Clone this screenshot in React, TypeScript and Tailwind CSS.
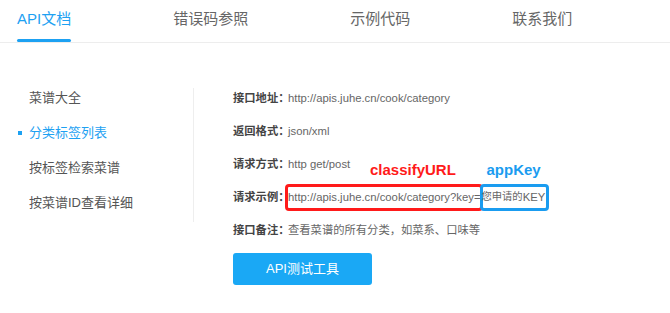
import React from "react";

const font = { fontFamily: '"Liberation Sans", "Noto Sans CJK SC", sans-serif' };

export default function App() {
  const tabs = ["API文档", "错误码参照", "示例代码", "联系我们"];
  const side = ["菜谱大全", "分类标签列表", "按标签检索菜谱", "按菜谱ID查看详细"];
  return (
    <div
      className="w-[670px] h-[313px] bg-white overflow-hidden font-['Liberation_Sans','Noto_Sans_CJK_SC',sans-serif]"
      style={font}
    >
      <div className="h-[43px] border-b border-[#ededed] flex items-stretch pl-[17px] gap-[102px]">
        {tabs.map((t, i) => (
          <div
            key={t}
            className={
              "flex flex-col justify-end text-[15px] " +
              (i === 0 ? "text-[#1da1f2]" : "text-[#666]")
            }
          >
            <div className="leading-[20px] mb-[10px] whitespace-nowrap">{t}</div>
            <div className={"h-[3px] rounded-full " + (i === 0 ? "bg-[#1da1f2]" : "bg-transparent")} />
          </div>
        ))}
      </div>
      <div className="flex mt-[45px]">
        <div className="w-[194px] h-[134px] border-r border-[#eeeeee] flex flex-col gap-[15px]">
          {side.map((s, i) => (
            <div
              key={s}
              className={
                "relative h-[20px] leading-[20px] pl-[29px] text-[13px] whitespace-nowrap " +
                (i === 1 ? "text-[#1da1f2]" : "text-[#555]")
              }
            >
              {i === 1 && (
                <span className="absolute left-[18px] top-[8px] w-[4px] h-[4px] bg-[#1da1f2]" />
              )}
              {s}
            </div>
          ))}
        </div>
        <div className="pl-[39px] flex flex-col gap-[13px] text-[11.3px]">
          <div className="h-[20px] flex items-center whitespace-nowrap">
            <span className="w-[52px] font-bold text-[#444]">接口地址：</span>
            <span className="ml-[3px] text-[#666]">http://apis.juhe.cn/cook/category</span>
          </div>
          <div className="h-[20px] flex items-center whitespace-nowrap">
            <span className="w-[52px] font-bold text-[#444]">返回格式：</span>
            <span className="ml-[3px] text-[#666]">json/xml</span>
          </div>
          <div className="h-[20px] flex items-center whitespace-nowrap">
            <span className="w-[52px] font-bold text-[#444]">请求方式：</span>
            <span className="ml-[3px] text-[#666]">http get/post</span>
          </div>
          <div className="h-[20px] flex items-center whitespace-nowrap">
            <span className="w-[52px] font-bold text-[#444]">请求示例：</span>
            <span className="relative h-[27px] flex items-center border-[3px] border-[#ff1a1a] rounded-[4px] text-[#666]">
              http://apis.juhe.cn/cook/category?key=
              <span className="absolute left-[82px] -top-[26px] text-[15px] font-bold text-[#ff1a1a] leading-[18px]">
                classifyURL
              </span>
            </span>
            <span className="relative h-[27px] flex items-center border-[3px] border-[#1a9cf0] rounded-[4px] text-[#666] -ml-[3px] pr-[1px]">
              <span className="text-[10.3px] -ml-[2px]">您申请的</span>KEY
              <span className="absolute left-[3px] -top-[26px] text-[15px] font-bold text-[#1a9cf0] leading-[18px]">
                appKey
              </span>
            </span>
          </div>
          <div className="h-[20px] flex items-center whitespace-nowrap">
            <span className="w-[52px] font-bold text-[#444]">接口备注：</span>
            <span className="ml-[3px] text-[#666]">查看菜谱的所有分类，如菜系、口味等</span>
          </div>
          <button className="w-[139px] h-[32px] rounded-[3px] bg-[#1aa8f5] text-white text-[13px] flex items-center justify-center">
            API测试工具
          </button>
        </div>
      </div>
    </div>
  );
}
